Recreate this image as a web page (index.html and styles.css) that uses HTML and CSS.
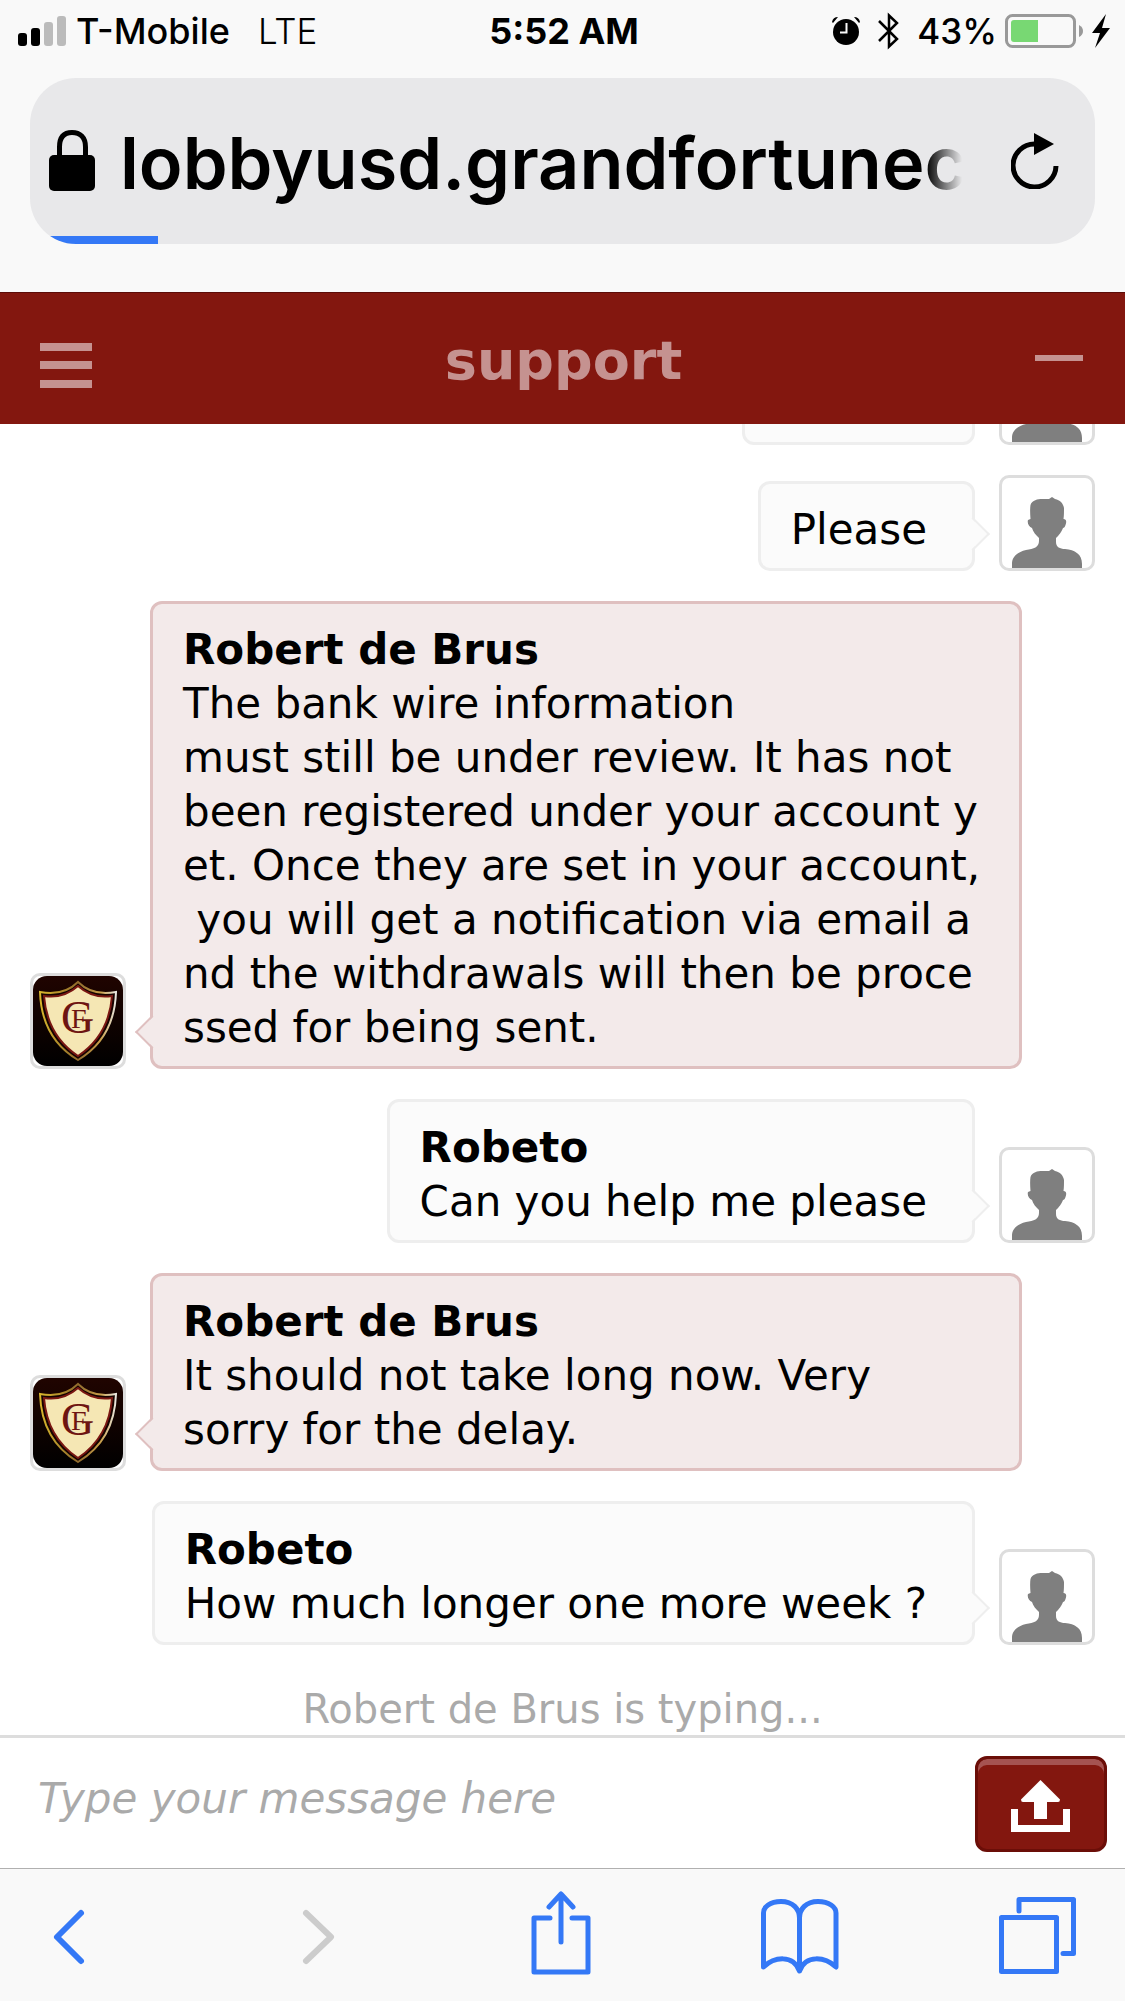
FILE: index.html
```html
<!DOCTYPE html>
<html lang="en">
<head>
<meta charset="utf-8">
<meta name="viewport" content="width=device-width">
<title>support</title>
<link rel="stylesheet" href="styles.css">
</head>
<body>
<svg class="defs" aria-hidden="true">
  <defs>
    <linearGradient id="night" x1="0" y1="0" x2="0" y2="1">
      <stop offset="0" stop-color="#200400"/><stop offset="1" stop-color="#000"/>
    </linearGradient>
    <linearGradient id="gold" x1="0" y1="0" x2="1" y2="0">
      <stop offset="0" stop-color="#d8b62c"/><stop offset=".5" stop-color="#8f6a2c"/><stop offset=".8" stop-color="#c9a04a"/><stop offset="1" stop-color="#e8e6e0"/>
    </linearGradient>
    <symbol id="person" viewBox="0 0 90 90">
      <path fill="#7f7f7f" d="M10 90V86C10 78 16 74 24 72C32 71 37 69 37 63V60C34 57 31 54 30 50C27 49 25 45 26 42L28.500 41C28 35 28 30 28.500 27C30 22 36 21 40 21H47L50 19L53 21C58 22 61 25 62 30C62 34 62 38 61.500 41C64 41 65 43 63.500 47C63 49 62 50 61 50C59 55 57 57 54 60V64C54 69 58 71 63 71C73 72 80 76 80 86V90Z"/>
    </symbol>
    <symbol id="crest" viewBox="0 0 90 90">
      <rect width="90" height="90" rx="14" fill="url(#night)"/>
      <path fill="#160300" stroke="url(#gold)" stroke-width="2" d="M45 6C36 15 23 19 7 16C8 45 20 69 45 84C70 69 82 45 83 16C67 19 54 15 45 6Z"/>
      <path fill="#f5e7b4" stroke="#7a1712" stroke-width="2" d="M45 10C36 18 24 22 11 20C13 46 24 66 45 80C66 66 77 46 79 20C66 22 54 18 45 10Z"/>
      <text x="28" y="57" class="crest-g">G</text>
      <text x="38" y="52" class="crest-f">F</text>
    </symbol>
  </defs>
</svg>

<div class="browser">
  <div class="status">
    <div class="status-side">
      <svg class="signal" width="48" height="30" viewBox="0 0 48 30" aria-label="Signal">
        <rect y="17" width="9" height="13" rx="3"/><rect x="13" y="12" width="9" height="18" rx="3"/>
        <g fill="#bbb"><rect x="26" y="6" width="9" height="24" rx="3"/><rect x="39" width="9" height="30" rx="3"/></g>
      </svg>
      <span class="carrier">T-Mobile</span>
      <span class="network">LTE</span>
    </div>
    <time class="clock">5:52 AM</time>
    <div class="status-side status-right">
      <svg width="28" height="28" viewBox="0 0 28 28" aria-label="Alarm">
        <circle cx="14" cy="15" r="13"/><path d="M0 5Q1 0 6 0L1 6ZM28 5Q27 0 22 0L27 6Z"/>
        <path d="M14.500 6V15.500H8" fill="none" stroke="#f9f9f9" stroke-width="2"/>
      </svg>
      <svg class="bluetooth" width="21" height="38" viewBox="0 0 21 38" aria-label="Bluetooth">
        <path d="M1 9L19 27L11 34.500V3.500L19 11L1 29" fill="none" stroke="#000" stroke-width="2.500"/>
      </svg>
      <span class="percent">43%</span>
      <svg width="78" height="34" viewBox="0 0 78 34" aria-label="Battery">
        <rect x="1.500" y="1.500" width="68" height="31" rx="6" fill="none" stroke="#999" stroke-width="3"/>
        <path d="M9 6H33V28H9Q6 28 6 25V9Q6 6 9 6Z" fill="#78d873"/><path d="M74 11Q78 13 78 17T74 23Z" fill="#999"/>
      </svg>
      <svg class="bolt" width="18" height="34" viewBox="0 0 18 34" aria-label="Charging"><path d="M14 0L0 19H8L3 34L18 14H10Z"/></svg>
    </div>
  </div>
  <div class="address">
    <svg width="46" height="62" viewBox="0 0 46 62" aria-label="Secure">
      <rect y="25" width="46" height="36" rx="5"/>
      <path d="M10.500 27V17C10.500 7 15 2.500 23 2.500S36.500 7 36.500 17V27" fill="none" stroke="#000" stroke-width="5"/>
    </svg>
    <span class="url">lobbyusd.grandfortunec</span>
    <button class="plain" aria-label="Reload">
      <svg width="48" height="56" viewBox="0 0 48 56"><path d="M24 11A21.500 21.500 0 1 0 45 33" fill="none" stroke="#000" stroke-width="5"/><path d="M23 0L43 11L23 22Z"/></svg>
    </button>
    <div class="progress"></div>
  </div>
</div>

<header class="titlebar">
  <button class="plain" aria-label="Menu">
    <svg width="52" height="46" viewBox="0 0 52 46" fill="#c59290"><rect y="1" width="52" height="8"/><rect y="19" width="52" height="8"/><rect y="38" width="52" height="8"/></svg>
  </button>
  <h1>support</h1>
  <button class="plain minimize" aria-label="Minimize">
    <svg width="48" height="6" viewBox="0 0 48 6"><rect width="48" height="6" fill="#c59290"/></svg>
  </button>
</header>

<main class="chat">
  <ul class="messages">
    <li class="row visitor"><div class="bubble earlier"></div><div class="avatar"><svg><use href="#person"/></svg></div></li>
    <li class="row visitor"><div class="bubble">Please</div><div class="avatar"><svg><use href="#person"/></svg></div></li>
    <li class="row agent"><div class="avatar"><svg><use href="#crest"/></svg></div>
      <div class="bubble"><strong>Robert de Brus</strong>The bank wire information<br>must still be under review. It has not<br>been registered under your account y<br>et. Once they are set in your account,<br>&nbsp;you will get a notification via email a<br>nd the withdrawals will then be proce<br>ssed for being sent.</div></li>
    <li class="row visitor"><div class="bubble"><strong>Robeto</strong>Can you help me please</div><div class="avatar"><svg><use href="#person"/></svg></div></li>
    <li class="row agent"><div class="avatar"><svg><use href="#crest"/></svg></div>
      <div class="bubble"><strong>Robert de Brus</strong>It should not take long now. Very<br>sorry for the delay.</div></li>
    <li class="row visitor"><div class="bubble"><strong>Robeto</strong>How much longer one more week ?</div><div class="avatar"><svg><use href="#person"/></svg></div></li>
  </ul>
  <p class="typing">Robert de Brus is typing...</p>
</main>

<form class="composer">
  <input type="text" aria-label="Message" placeholder="Type your message here">
  <button type="button" class="upload" aria-label="Upload file">
    <svg width="60" height="52" viewBox="0 0 60 52" fill="#fff"><path d="M0 29H7V45H52V29H59V52H0Z"/><path d="M29.500 0L49 19.500Q49 22 47 22H36V39H23V22H12Q10 22 10 19.500Z"/></svg>
  </button>
</form>

<nav class="toolbar">
  <button class="plain" aria-label="Back"><svg class="chevron" viewBox="0 0 78 84"><path d="M33 22L9 46L33 70"/></svg></button>
  <button class="plain" aria-label="Forward" disabled><svg class="chevron" viewBox="0 0 78 84"><path d="M20 22L45 46L20 70"/></svg></button>
  <button class="plain" aria-label="Share"><svg viewBox="0 0 78 84"><path d="M26 27H10V81H64V27H48M37 51V4M25 16L37 3L49 16"/></svg></button>
  <button class="plain" aria-label="Bookmarks"><svg viewBox="0 0 78 84"><path d="M38.500 75V27C38.500 18 32 10.500 20 10.500C9 10.500 2.500 16 2.500 22V76C13 66 32 63 38.500 80C45 63 64 66 75 76V22C75 16 68 10.500 57 10.500C45 10.500 38.500 18 38.500 27"/></svg></button>
  <button class="plain" aria-label="Tabs"><svg viewBox="0 0 78 84"><path d="M2.500 26.500H57.500V80.500H2.500ZM20 20V8.500H74.500V62.500H64"/></svg></button>
</nav>
</body>
</html>
```
FILE: styles.css
```css
* { box-sizing: border-box; }

body {
  margin: 0;
  height: 100vh;
  display: flex;
  flex-direction: column;
  background: #fff;
  color: #000;
  font-family: "DejaVu Sans", Verdana, sans-serif;
  font-size: 42px;
  line-height: 54px;
}

svg { display: block; flex: none; }
.defs { position: absolute; width: 0; height: 0; }

.plain {
  flex: none;
  padding: 0;
  border: 0;
  background: none;
}

/* Browser chrome */
.browser {
  flex: none;
  padding-bottom: 48px;
  background: #f9f9f9;
  font-family: Inter, sans-serif;
}

.status {
  display: grid;
  grid-template-columns: 1fr auto 1fr;
  align-items: center;
  height: 78px;
  padding: 0 15px 16px 18px;
  font-size: 36px;
}

.status-side { display: flex; align-items: center; }
.status-right { justify-content: flex-end; font-size: 35px; }
.carrier { margin: 0 28px 0 10px; font-weight: 500; }
.network { font-size: 35px; font-weight: 300; }
.clock { font-weight: 700; }
.bluetooth { margin: 0 18px; }
.percent { margin-right: 8px; font-weight: 500; }
.bolt { margin-left: 9px; }

.address {
  position: relative;
  overflow: hidden;
  display: flex;
  align-items: center;
  height: 166px;
  margin: 0 30px;
  padding: 0 36px 0 19px;
  border-radius: 46px;
  background: #e8e8ea;
}

.url {
  flex: 1;
  min-width: 0;
  overflow: hidden;
  margin: 0 49px 0 25px;
  padding-top: 4px;
  font-size: 72px;
  line-height: 96px;
  font-weight: 600;
  white-space: nowrap;
  -webkit-mask-image: linear-gradient(to left, transparent, #000 36px);
  mask-image: linear-gradient(to left, transparent, #000 36px);
}

.progress {
  position: absolute;
  left: 0;
  bottom: 0;
  width: 12%;
  height: 8px;
  background: #3478f6;
}

/* Chat title */
.titlebar {
  flex: none;
  display: flex;
  align-items: center;
  justify-content: space-between;
  height: 132px;
  padding: 12px 42px 0 40px;
  border-top: 1px solid #5c0c08;
  background: #83170f;
  color: #c59290;
}

.titlebar h1 {
  margin: 0;
  padding-bottom: 8px;
  font-size: 54px;
  line-height: 64px;
}

.minimize { padding-bottom: 14px; }

/* Conversation */
.chat {
  flex: 1;
  min-height: 0;
  overflow: hidden;
  display: flex;
  flex-direction: column;
  justify-content: flex-end;
}

.messages {
  flex: none;
  display: flex;
  flex-direction: column;
  gap: 30px;
  margin: 0;
  padding: 0 30px;
  list-style: none;
}

.row { display: flex; align-items: flex-end; gap: 24px; }
.visitor { justify-content: flex-end; }

.avatar {
  flex: none;
  width: 96px;
  height: 96px;
  border: 3px solid #ddd;
  border-radius: 10px;
  background: #fff;
}

.avatar svg { width: 90px; height: 90px; }
.crest-g { font: 46px "Liberation Serif", serif; fill: #6e1512; }
.crest-f { font: 28px "Liberation Serif", serif; fill: #6e1512; }

.bubble {
  position: relative;
  padding: 19px 45px 11px 30px;
  border: 3px solid #eee;
  border-radius: 12px;
  background: #fbfbfb;
}

.bubble strong { display: block; }
.earlier { width: 233px; height: 90px; }

.agent .bubble {
  flex: 1;
  margin-right: 73px;
  padding-right: 30px;
  border-color: #dfc0c0;
  background: #f3eaea;
  white-space: nowrap;
}

.bubble::after {
  content: "";
  position: absolute;
  right: -13px;
  bottom: 22px;
  width: 22px;
  height: 22px;
  border: solid #eee;
  border-width: 2px 2px 0 0;
  background: linear-gradient(45deg, transparent 50%, #fbfbfb 50%);
  transform: rotate(45deg);
}

.agent .bubble::after {
  right: auto;
  left: -13px;
  border-color: #dfc0c0;
  border-width: 0 0 2px 2px;
  background: linear-gradient(45deg, #f3eaea 50%, transparent 50%);
}

.typing {
  flex: none;
  margin: 0;
  padding: 38px 0 0;
  font-size: 40px;
  line-height: 52px;
  text-align: center;
  color: #aaa;
}

/* Message box */
.composer {
  flex: none;
  display: flex;
  align-items: center;
  height: 133px;
  padding: 2px 18px 0 38px;
  border-top: 3px solid #ddd;
}

.composer input {
  flex: 1;
  min-width: 0;
  padding: 0 0 10px;
  border: 0;
  outline: 0;
  background: none;
  font: inherit;
  font-style: italic;
}

.composer input::placeholder { color: #aaa; opacity: 1; }

.upload {
  display: grid;
  place-items: center;
  width: 132px;
  height: 96px;
  padding: 4px 0 0;
  border: 3px solid #6b0e08;
  border-radius: 12px;
  background: #83170f;
  box-shadow: inset 0 6px #a55351;
}

/* Browser toolbar */
.toolbar {
  flex: none;
  display: flex;
  justify-content: space-between;
  height: 133px;
  padding: 22px 48px 0;
  border-top: 1px solid #b0b0b0;
  background: #f9f9f9;
}

.toolbar svg {
  width: 78px;
  height: 84px;
  fill: none;
  stroke: #3478f6;
  stroke-width: 5;
  stroke-linecap: round;
  stroke-linejoin: round;
}

.toolbar .chevron { stroke-width: 6; }
.toolbar button { height: 84px; }
.toolbar button:disabled svg { stroke: #ccc; }
```
